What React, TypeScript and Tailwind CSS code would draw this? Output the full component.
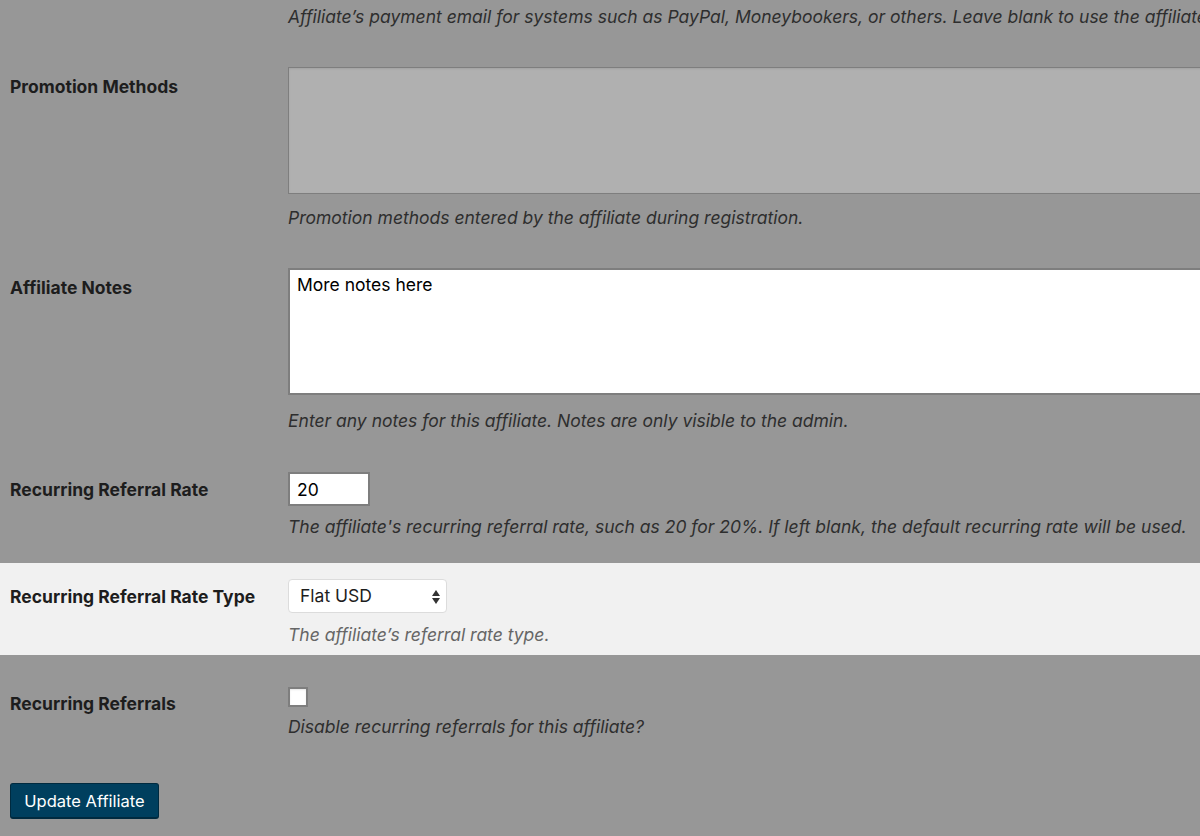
import React from 'react';

type RowProps = {
  label?: string;
  labelTop: string;
  rowTop: string;
  children: React.ReactNode;
  highlight?: boolean;
};

const Row: React.FC<RowProps> = ({ label, labelTop, rowTop, children, highlight }) => (
  <div className={`flex ${rowTop} ${highlight ? 'bg-[#f1f1f1]' : ''}`}>
    <div className={`w-[288px] shrink-0 pl-[10px] ${labelTop} text-[17.5px] leading-[22px] font-bold text-[#1d1d1d]`}>
      {label}
    </div>
    <div className="flex-1 min-w-0">{children}</div>
  </div>
);

const Desc: React.FC<{ children: React.ReactNode; className?: string; muted?: boolean }> = ({
  children,
  className = '',
  muted,
}) => (
  <p
    className={`text-[17.5px] leading-[22px] italic whitespace-nowrap ${muted ? 'text-[#666]' : 'text-[#2e2e2e]'} ${className}`}
  >
    {children}
  </p>
);

const App: React.FC = () => {
  return (
    <div
      className="w-[1200px] h-[836px] overflow-hidden bg-[#979797]"
      style={{ fontFamily: 'Inter, "Helvetica Neue", Arial, sans-serif' }}
    >
      {/* payment email hint, tail of the previous row */}
      <Row labelTop="" rowTop="pt-[6px]">
        <Desc>
          Affiliate’s payment email for systems such as PayPal, Moneybookers, or others. Leave blank to use the affiliate’s
        </Desc>
      </Row>

      {/* promotion methods (read only) */}
      <Row label="Promotion Methods" labelTop="pt-[9px]" rowTop="pt-[39px]">
        <div className="w-[1000px] h-[127px] bg-[#b0b0b0] border border-[#7e7e7e] shadow-[inset_0_1px_2px_rgba(0,0,0,0.08)]" />
        <Desc className="mt-[13px]">Promotion methods entered by the affiliate during registration.</Desc>
      </Row>

      {/* notes */}
      <Row label="Affiliate Notes" labelTop="pt-[9px]" rowTop="pt-[39px]">
        <textarea
          readOnly
          value="More notes here"
          className="block w-[1000px] h-[127px] bg-white border-2 border-[#7e7e7e] px-[7px] py-[4px] text-[17.5px] leading-[22px] text-black resize-none outline-none"
        />
        <Desc className="mt-[15px]">Enter any notes for this affiliate. Notes are only visible to the admin.</Desc>
      </Row>

      {/* recurring rate */}
      <Row label="Recurring Referral Rate" labelTop="pt-[7px]" rowTop="pt-[40px]">
        <input
          readOnly
          value="20"
          className="block w-[82px] h-[34px] bg-white border-2 border-[#7e7e7e] px-[7px] pt-[1px] text-[17.5px] text-black outline-none"
        />
        <Desc className="mt-[10px]">
          The affiliate's recurring referral rate, such as 20 for 20%. If left blank, the default recurring rate will be used.
        </Desc>
      </Row>

      {/* rate type */}
      <div className="mt-[25px]">
        <Row label="Recurring Referral Rate Type" labelTop="pt-[7px]" rowTop="pt-[16px] pb-[9px]" highlight>
          <div className="flex items-center justify-between w-[159px] h-[34px] bg-white border border-[#dcdcdc] rounded-[4px] pl-[11px] pr-[5px] pt-[1px] text-[17.5px] text-[#1d1d1d]">
            <span>Flat USD</span>
            <svg width="10" height="16" viewBox="0 0 10 16" fill="#333">
              <path d="M5 1 L9 7 H1 Z" />
              <path d="M5 15 L9 9 H1 Z" />
            </svg>
          </div>
          <Desc muted className="mt-[11px]">The affiliate’s referral rate type.</Desc>
        </Row>
      </div>

      {/* disable recurring */}
      <Row label="Recurring Referrals" labelTop="pt-[6px]" rowTop="pt-[32px]">
        <div className="w-[20px] h-[20px] bg-white border-2 border-[#7e7e7e] shadow-[inset_0_1px_2px_rgba(0,0,0,0.1)]" />
        <Desc className="mt-[9px]">Disable recurring referrals for this affiliate?</Desc>
      </Row>

      <div className="pl-[10px] mt-[45px]">
        <button className="w-[149px] h-[36px] pt-[1px] bg-[#003f5e] border border-[#002a3f] border-b-2 rounded-[3px] text-white text-[16.5px] leading-[22px]">
          Update Affiliate
        </button>
      </div>
    </div>
  );
};

export default App;
